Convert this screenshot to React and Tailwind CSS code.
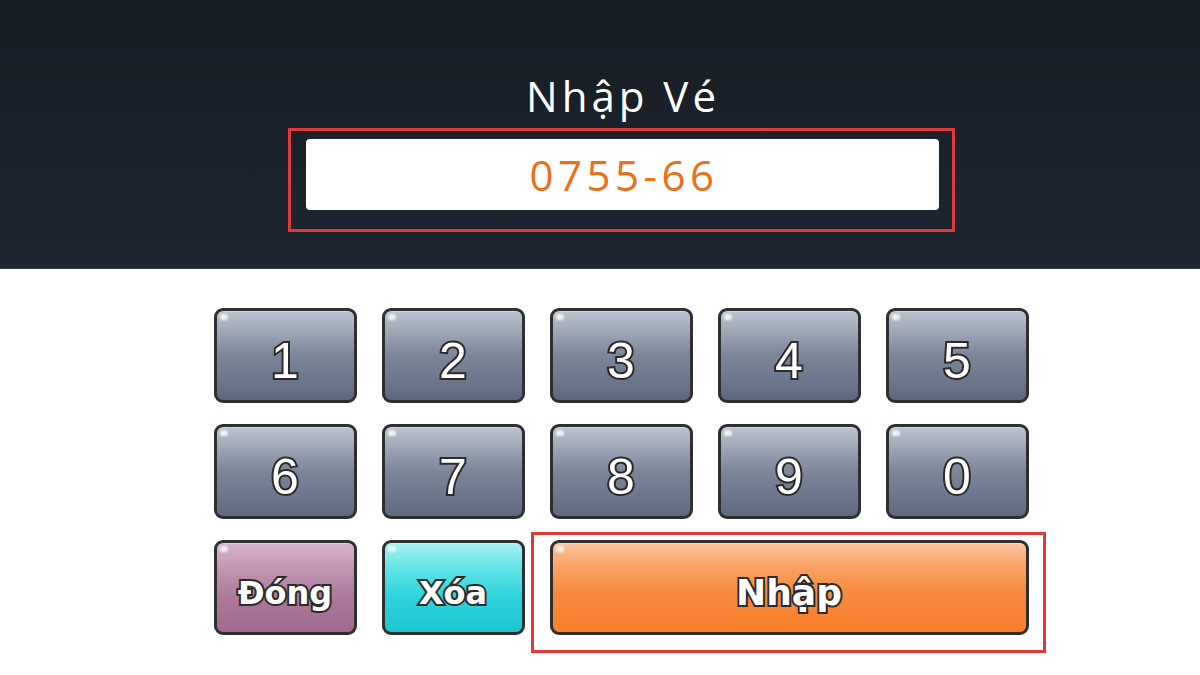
import React, { useState } from 'react';

// Kiểu chữ viền đen cho nút
const outline = '[paint-order:stroke_fill] [-webkit-text-stroke:4px_#2b2b2b]';

const KEYS = ['1', '2', '3', '4', '5', '6', '7', '8', '9', '0'];

const Key = ({ label, onPress, tone = 'gray', className = '', textClass = '' }) => {
    // Màu nền theo loại nút
    const tones = {
        gray: 'bg-[linear-gradient(180deg,#bcc3cf_0%,#98a1b1_28%,#7c8699_50%,#6b768a_80%,#5e697d_100%)]',
        pink: 'bg-[linear-gradient(180deg,#d8b3cc_0%,#c194b2_30%,#ad7a9b_60%,#9e6b8c_100%)]',
        cyan: 'bg-[linear-gradient(180deg,#a8f2f2_0%,#5fe3e6_30%,#2dd3da_60%,#1fc6d0_100%)]',
        orange: 'bg-[linear-gradient(180deg,#fcc7a0_0%,#f9a469_25%,#f78a3d_55%,#f97f2b_100%)]',
    };
    return (
        <button
            onClick={onPress}
            className={`relative h-[95px] rounded-[9px] border-[3px] border-[#2f2f2f] shadow-[inset_0_1px_0_rgba(255,255,255,0.35)] flex items-center justify-center text-white ${tones[tone]} ${className}`}
        >
            {/* Điểm sáng góc trái */}
            <span className="absolute left-[3px] top-[3px] w-[8px] h-[6px] rounded-full bg-white/80 blur-[1px]" />
            <span className={`mt-[10px] ${outline} ${textClass}`}>{label}</span>
        </button>
    );
};

export default function App() {
    const [value, setValue] = useState('0755-66');

    const press = (k) => setValue((v) => v + k);

    return (
        <div className="w-[1200px] h-[675px] bg-white overflow-hidden" style={{ fontFamily: '"Open Sans", "Liberation Sans", sans-serif' }}>
            {/* Phần đầu tối */}
            <div className="h-[269px] bg-[linear-gradient(180deg,#171d25_0%,#1b222b_60%,#1d2530_100%)] border-b border-[#3a414b] flex flex-col items-center pl-[42px] pt-[72px]">
                <h1 className="text-[42px] leading-[48px] text-white tracking-[4px] pl-[4px]">Nhập Vé</h1>
                <div className="mt-[8px] w-[667px] h-[104px] border-[3px] border-[#e0393c] pl-[15px] pr-[13px] pt-[8px]">
                    <div className="h-[71px] bg-white rounded-[4px] flex items-center justify-center">
                        <span className="text-[42px] text-[#e8711c] tracking-[4.5px] pl-[4px]">{value}</span>
                    </div>
                </div>
            </div>

            {/* Bàn phím số */}
            <div className="flex justify-center pl-[42px] pt-[39px]">
                <div className="grid grid-cols-[repeat(5,143px)] gap-x-[25px] gap-y-[21px]" style={{ fontFamily: '"Liberation Sans", Arial, sans-serif' }}>
                    {KEYS.map((k) => (
                        <Key key={k} label={k} onPress={() => press(k)} textClass="text-[50px] leading-none" />
                    ))}
                    <Key label="Đóng" tone="pink" textClass="font-['DejaVu_Sans'] text-[32px] font-bold leading-none" />
                    <Key label="Xóa" tone="cyan" onPress={() => setValue((v) => v.slice(0, -1))} textClass="font-['DejaVu_Sans'] text-[32px] font-bold leading-none" />
                    <div className="relative col-span-3">
                        {/* Khung đỏ đánh dấu */}
                        <div className="absolute -left-[19px] -right-[17px] -top-[8px] -bottom-[18px] border-[3px] border-[#e0393c] pointer-events-none" />
                        <Key label="Nhập" tone="orange" className="w-full" textClass="font-['DejaVu_Sans'] text-[36px] font-bold leading-none" />
                    </div>
                </div>
            </div>
        </div>
    );
}
